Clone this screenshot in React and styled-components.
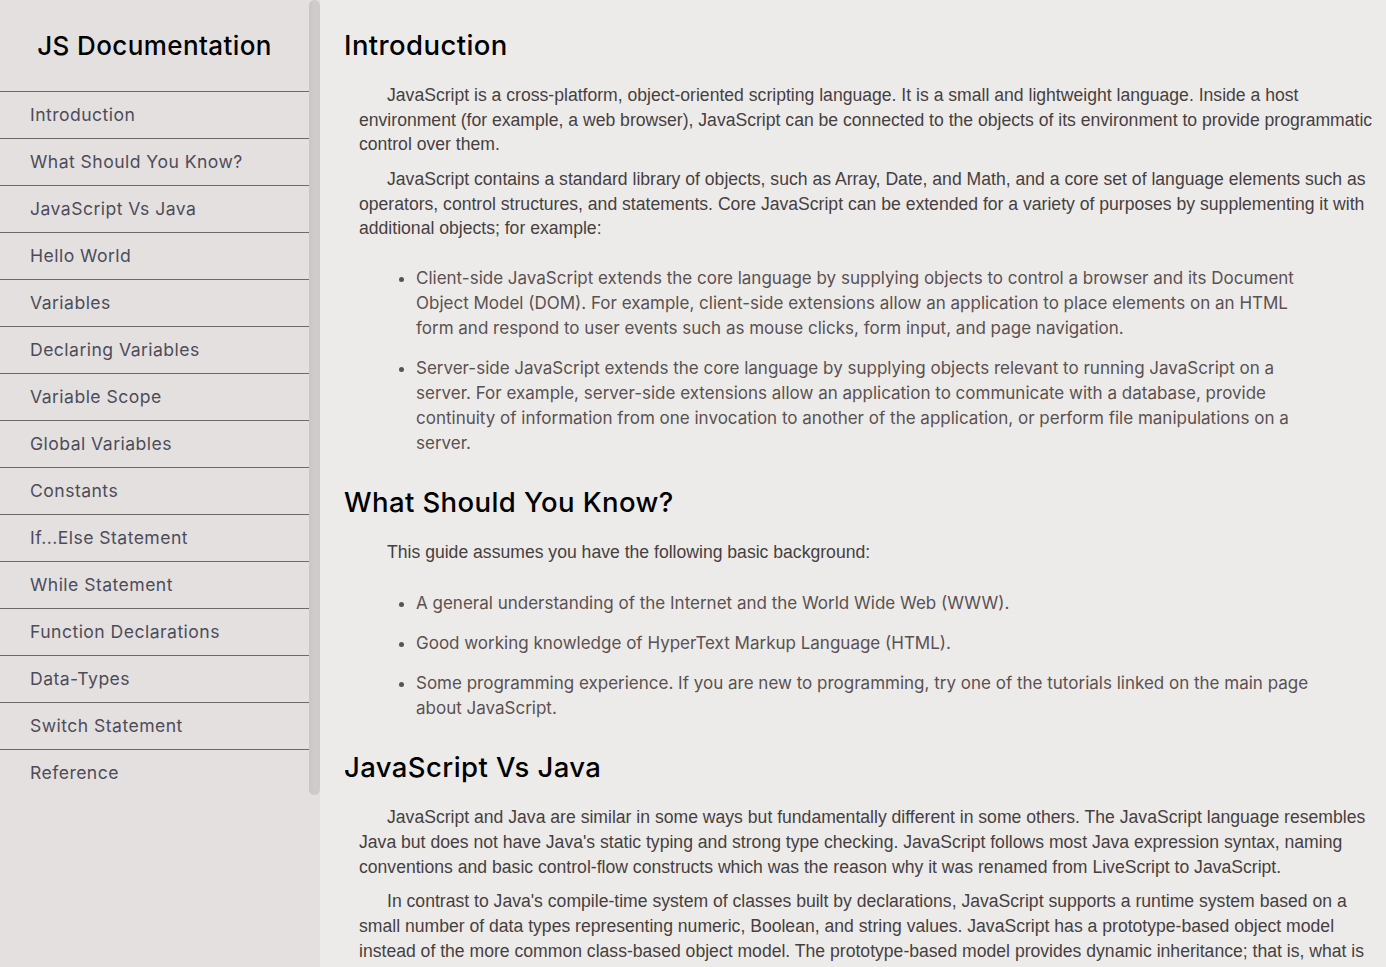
import React from "react";
import styled, { createGlobalStyle } from "styled-components";

const GlobalStyle = createGlobalStyle`
  html, body { margin: 0; padding: 0; }
  body {
    background: #edebea;
    font-family: "Liberation Sans", Arial, sans-serif;
  }
`;

const Page = styled.div`
  display: flex;
  height: 100vh;
  overflow: hidden;
`;

const Sidebar = styled.nav`
  flex: 0 0 320px;
  display: flex;
  height: 100vh;
  background: #e4e0e0;
  font-family: Inter, "Open Sans", sans-serif;
`;

const SideContent = styled.div`
  width: 309px;
  flex: 0 0 309px;
`;

const ScrollRail = styled.div`
  flex: 1;
  display: flex;
  flex-direction: column;
`;

const ScrollThumb = styled.div`
  height: 795px;
  width: 11px;
  border-radius: 6px;
  background: linear-gradient(90deg, #c9c5c5 0%, #d0cccc 45%, #cfcbcb 100%);
`;

const Title = styled.header`
  height: 91px;
  box-sizing: border-box;
  padding-top: 26px;
  text-align: center;
  font-size: 26px;
  line-height: 40px;
  font-weight: 500;
  color: #000;
  letter-spacing: 0.4px;
`;

const NavList = styled.ul`
  list-style: none;
  margin: 0;
  padding: 0;
`;

const NavItem = styled.li`
  border-top: 1px solid #6e6868;
  height: 47px;
  box-sizing: border-box;
  padding: 11px 0 0 30px;
  font-size: 17.6px;
  line-height: 24px;
  color: #4d4c5a;
  letter-spacing: 0.45px;
`;

const Main = styled.main`
  flex: 1;
  height: 100vh;
  overflow-y: auto;
  scrollbar-width: none;
  box-sizing: border-box;
  padding: 25px 10px 0 24px;
  &::-webkit-scrollbar { display: none; }
`;

const Section = styled.section`
  margin-bottom: 26px;
`;

const Heading = styled.h2`
  margin: 0 0 18px;
  font-family: Inter, "Open Sans", sans-serif;
  font-size: 27.5px;
  line-height: 40px;
  font-weight: 500;
  color: #000;
  letter-spacing: 0.4px;
`;

const Para = styled.p`
  margin: 0 0 10px 15px;
  text-indent: 28px;
  font-size: 17.6px;
  line-height: 1.4;
  color: #463f3f;
`;

const List = styled.ul`
  margin: ${(p) => (p.$gap ? p.$gap : 25)}px 50px 0 32px;
  padding-left: 40px;
  font-family: Inter, "Open Sans", sans-serif;
  font-size: 17px;
  line-height: 25px;
  color: #5a5151;
`;

const Item = styled.li`
  margin-bottom: 15px;
  &:last-child { margin-bottom: 0; }
  &::marker { color: #5a5151; }
`;

const navItems = [
  "Introduction",
  "What Should You Know?",
  "JavaScript Vs Java",
  "Hello World",
  "Variables",
  "Declaring Variables",
  "Variable Scope",
  "Global Variables",
  "Constants",
  "If...Else Statement",
  "While Statement",
  "Function Declarations",
  "Data-Types",
  "Switch Statement",
  "Reference",
];

export default function App() {
  return (
    <>
      <GlobalStyle />
      <Page>
        <Sidebar>
          <SideContent>
            <Title>JS Documentation</Title>
            <NavList>
              {navItems.map((t) => (
                <NavItem key={t}>{t}</NavItem>
              ))}
            </NavList>
          </SideContent>
          <ScrollRail>
            <ScrollThumb />
          </ScrollRail>
        </Sidebar>
        <Main>
          <Section>
            <Heading>Introduction</Heading>
            <Para>
              JavaScript is a cross-platform, object-oriented scripting language. It is a small and
              lightweight language. Inside a host environment (for example, a web browser), JavaScript
              can be connected to the objects of its environment to provide programmatic control over
              them.
            </Para>
            <Para>
              JavaScript contains a standard library of objects, such as Array, Date, and Math, and a
              core set of language elements such as operators, control structures, and statements. Core
              JavaScript can be extended for a variety of purposes by supplementing it with additional
              objects; for example:
            </Para>
            <List>
              <Item>
                Client-side JavaScript extends the core language by supplying objects to control a
                browser and its Document Object Model (DOM). For example, client-side extensions allow
                an application to place elements on an HTML form and respond to user events such as
                mouse clicks, form input, and page navigation.
              </Item>
              <Item>
                Server-side JavaScript extends the core language by supplying objects relevant to
                running JavaScript on a server. For example, server-side extensions allow an application
                to communicate with a database, provide continuity of information from one invocation to
                another of the application, or perform file manipulations on a server.
              </Item>
            </List>
          </Section>
          <Section>
            <Heading>What Should You Know?</Heading>
            <Para>This guide assumes you have the following basic background:</Para>
            <List $gap={27}>
              <Item>A general understanding of the Internet and the World Wide Web (WWW).</Item>
              <Item>Good working knowledge of HyperText Markup Language (HTML).</Item>
              <Item>
                Some programming experience. If you are new to programming, try one of the tutorials
                linked on the main page about JavaScript.
              </Item>
            </List>
          </Section>
          <Section>
            <Heading>JavaScript Vs Java</Heading>
            <Para>
              JavaScript and Java are similar in some ways but fundamentally different in some others.
              The JavaScript language resembles Java but does not have Java's static typing and strong
              type checking. JavaScript follows most Java expression syntax, naming conventions and
              basic control-flow constructs which was the reason why it was renamed from LiveScript to
              JavaScript.
            </Para>
            <Para>
              In contrast to Java's compile-time system of classes built by declarations, JavaScript
              supports a runtime system based on a small number of data types representing numeric,
              Boolean, and string values. JavaScript has a prototype-based object model instead of the
              more common class-based object model. The prototype-based model provides dynamic
              inheritance; that is, what is inherited can vary for individual objects. JavaScript also
              supports functions without any special declarative requirements. Functions can be
              properties of objects, executing as loosely typed methods.
            </Para>
          </Section>
        </Main>
      </Page>
    </>
  );
}
